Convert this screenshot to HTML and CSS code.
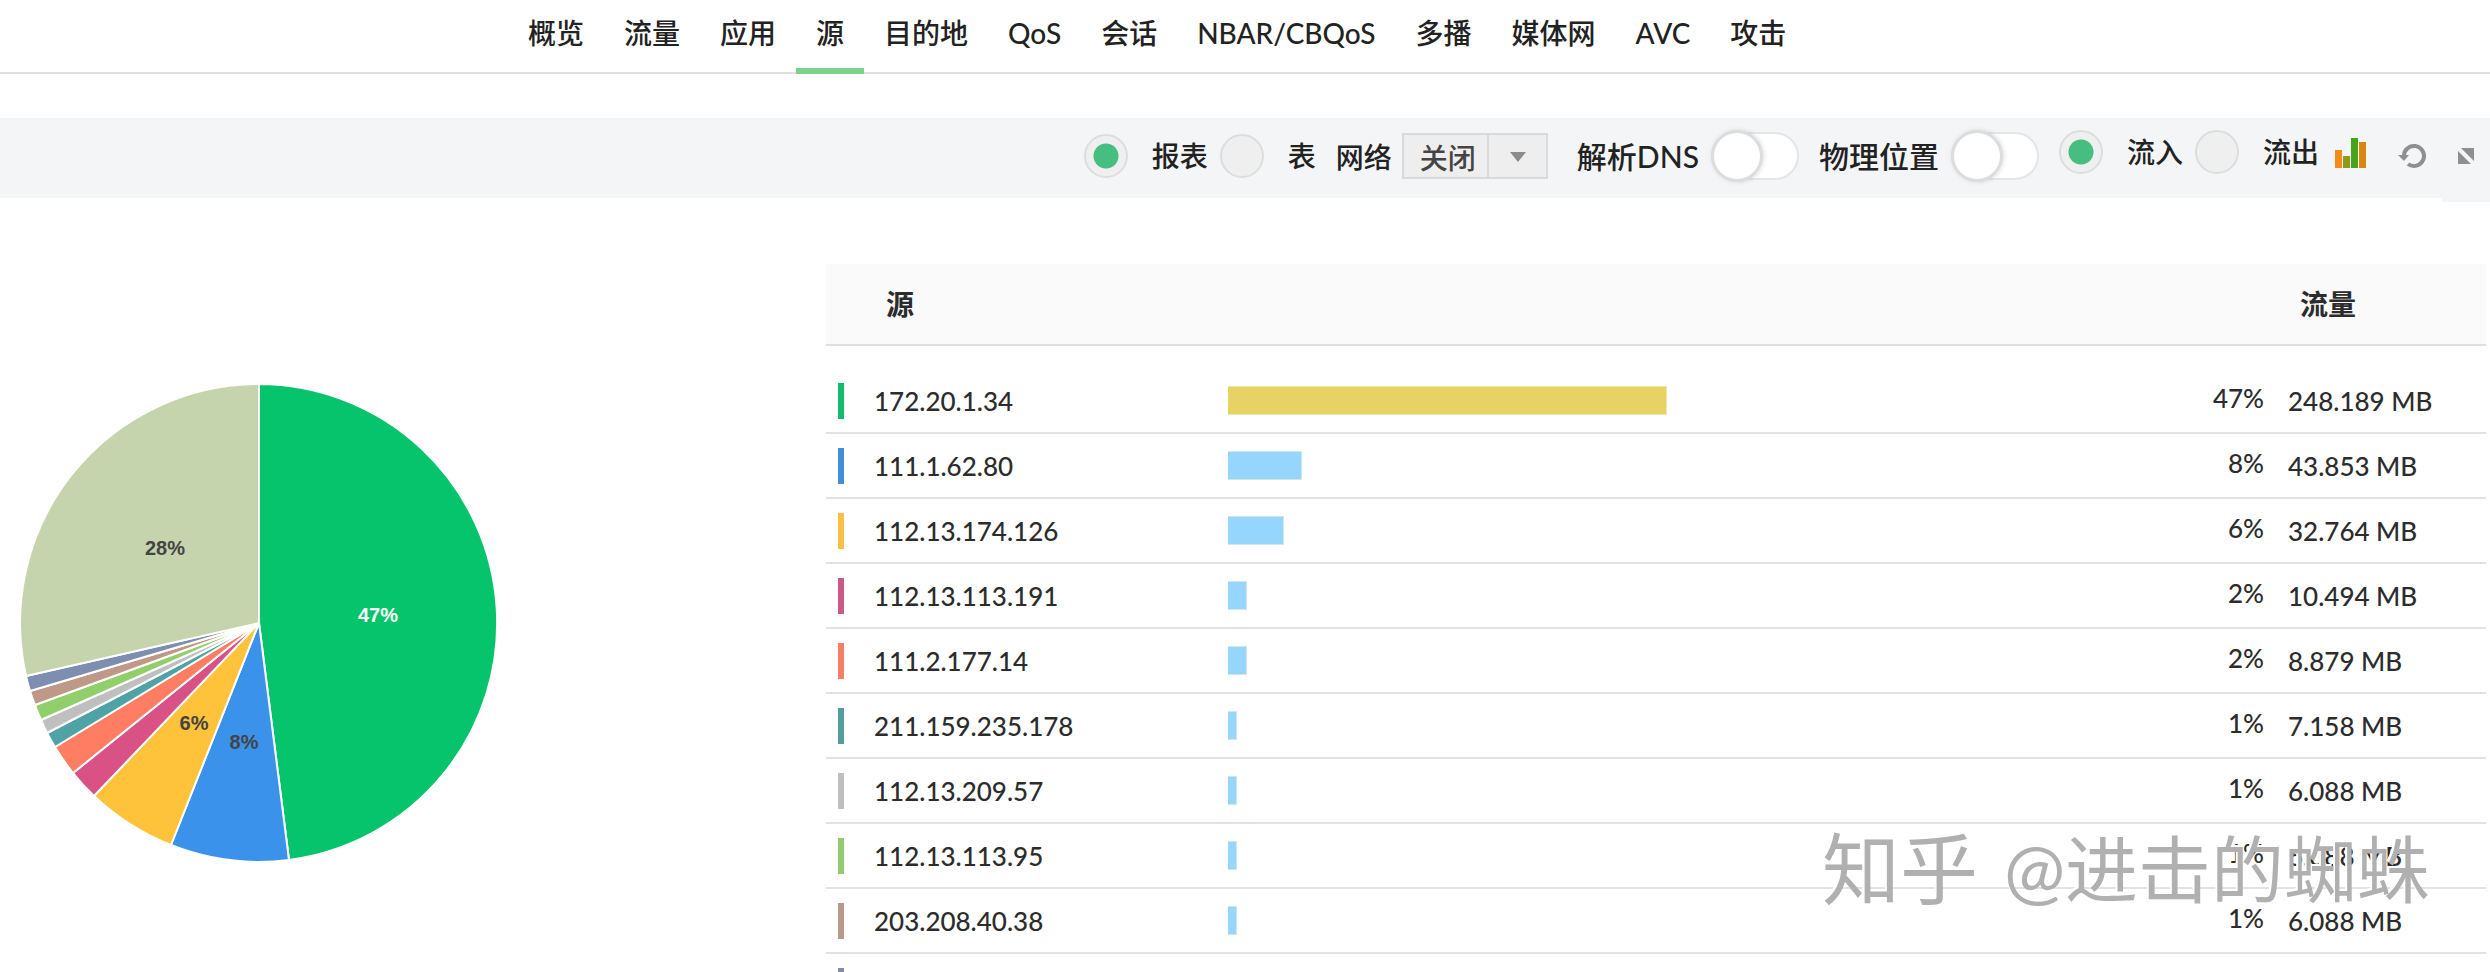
FILE: index.html
```
<!DOCTYPE html>
<html lang="zh-CN">
  <head>
    <meta charset="UTF-8" />
    <meta name="viewport" content="width=device-width, initial-scale=1.0" />
    <title>源</title>
    <link rel="stylesheet" href="styles.css">
  </head>
  <body>
    <nav class="tabs">
      <a href="#">概览</a>
      <a href="#">流量</a>
      <a href="#">应用</a>
      <a href="#" class="active">源</a>
      <a href="#">目的地</a>
      <a href="#">QoS</a>
      <a href="#">会话</a>
      <a href="#">NBAR/CBQoS</a>
      <a href="#">多播</a>
      <a href="#">媒体网</a>
      <a href="#">AVC</a>
      <a href="#">攻击</a>
    </nav>

    <div class="toolbar">
      <div class="group">
        <label class="radio"><input type="radio" name="view" checked />报表</label>
        <label class="radio"><input type="radio" name="view" />表</label>
      </div>
      <div class="group network">
        <label for="network">网络</label>
        <div class="select">
          <select id="network">
            <option>关闭</option>
            <option>打开</option>
          </select>
        </div>
      </div>
      <label class="switch">解析DNS<input type="checkbox" /></label>
      <label class="switch">物理位置<input type="checkbox" /></label>
      <div class="group direction">
        <label class="radio"><input type="radio" name="direction" checked />流入</label>
        <label class="radio"><input type="radio" name="direction" />流出</label>
      </div>
      <button class="icon chart-icon" aria-label="图表">
        <svg width="32" height="32" viewBox="0 0 32 32">
          <rect x="0" y="12" width="7" height="18" fill="#f58a1c" />
          <rect x="8" y="18" width="7" height="12" fill="#8f9a16" />
          <rect x="16" y="0" width="7" height="30" fill="#47a51c" />
          <rect x="24" y="4" width="7" height="26" fill="#d9860e" />
        </svg>
      </button>
      <button class="icon refresh-icon" aria-label="刷新">
        <svg width="28" height="26" viewBox="0 0 28 26">
          <path d="M6 14 A10 10 0 1 1 10 21" fill="none" stroke="#8e8f90" stroke-width="4" />
          <path d="M0 12 H11 L6 18 Z" fill="#8e8f90" />
        </svg>
      </button>
      <button class="icon" aria-label="展开">
        <svg width="18" height="18" viewBox="0 0 18 18">
          <path d="M4 1 H17 V14 Z M1 4 L14 17 H1 Z" fill="#8e8f90" />
        </svg>
      </button>
    </div>

    <main class="content">
      <section class="chart">
        <svg class="pie" width="478" height="478" viewBox="-239 -239 478 478">
          <g stroke="#fff" stroke-width="2" stroke-linejoin="round">
            <path fill="#06c46b" d="M0 0 L0 -239 A239 239 0 0 1 30 237 Z" />
            <path fill="#3b92ea" d="M0 0 L30 237 A239 239 0 0 1 -88 222 Z" />
            <path fill="#fec33b" d="M0 0 L-88 222 A239 239 0 0 1 -165 173 Z" />
            <path fill="#d85286" d="M0 0 L-165 173 A239 239 0 0 1 -186 150 Z" />
            <path fill="#ff7e63" d="M0 0 L-186 150 A239 239 0 0 1 -204 124 Z" />
            <path fill="#4fa3a6" d="M0 0 L-204 124 A239 239 0 0 1 -212 110 Z" />
            <path fill="#bfbfbf" d="M0 0 L-212 110 A239 239 0 0 1 -218 97 Z" />
            <path fill="#91cf6b" d="M0 0 L-218 97 A239 239 0 0 1 -224 82 Z" />
            <path fill="#be9987" d="M0 0 L-224 82 A239 239 0 0 1 -229 68 Z" />
            <path fill="#7e8eb0" d="M0 0 L-229 68 A239 239 0 0 1 -233 53 Z" />
            <path fill="#c6d4ae" d="M0 0 L-233 53 A239 239 0 0 1 0 -239 Z" />
          </g>
          <g class="pie-labels">
            <text class="light" x="119" y="-1">47%</text>
            <text x="-15" y="126">8%</text>
            <text x="-65" y="107">6%</text>
            <text x="-94" y="-68">28%</text>
          </g>
        </svg>
      </section>

      <section class="report">
        <table>
          <colgroup>
            <col class="col-color" />
            <col class="col-name" />
            <col />
            <col class="col-percent" />
            <col class="col-value" />
          </colgroup>
          <thead>
            <tr>
              <th></th>
              <th class="name">源</th>
              <th></th>
              <th></th>
              <th class="value">流量</th>
            </tr>
          </thead>
          <tbody id="rows"></tbody>
        </table>
      </section>
    </main>

    <div class="watermark"><span class="brand">知乎</span><span>@进击的蜘蛛</span></div>

    <script>
      // bar is the share of the bar column, in percent
      const rows = [
        { color: "#14bb6d", name: "172.20.1.34", bar: 47.2, percent: "47%", value: "248.189 MB", top: true },
        { color: "#428edb", name: "111.1.62.80", bar: 8, percent: "8%", value: "43.853 MB" },
        { color: "#f9c043", name: "112.13.174.126", bar: 6, percent: "6%", value: "32.764 MB" },
        { color: "#cc5885", name: "112.13.113.191", bar: 2, percent: "2%", value: "10.494 MB" },
        { color: "#f87f67", name: "111.2.177.14", bar: 2, percent: "2%", value: "8.879 MB" },
        { color: "#559c9e", name: "211.159.235.178", bar: 1, percent: "1%", value: "7.158 MB" },
        { color: "#bfbfbf", name: "112.13.209.57", bar: 1, percent: "1%", value: "6.088 MB" },
        { color: "#93cb71", name: "112.13.113.95", bar: 1, percent: "1%", value: "6.088 MB" },
        { color: "#ba998a", name: "203.208.40.38", bar: 1, percent: "1%", value: "6.088 MB" },
        { color: "#7f8cae", name: "", bar: 0, percent: "", value: "" },
      ];

      document.getElementById("rows").innerHTML = rows
        .map(
          (row) => `
          <tr>
            <td><div class="tick" style="background-color: ${row.color}"></div></td>
            <td>${row.name}</td>
            <td>${row.bar ? `<div class="bar${row.top ? " top" : ""}" style="width: ${row.bar}%"></div>` : ""}</td>
            <td class="percent">${row.percent}</td>
            <td class="value">${row.value}</td>
          </tr>`
        )
        .join("");
    </script>
  </body>
</html>
```
FILE: styles.css
```
* {
  box-sizing: border-box;
}
body {
  margin: 0;
  height: 100vh;
  overflow: hidden;
  font-family: Lato, "Noto Sans CJK SC", sans-serif;
  font-size: 28px;
  font-weight: 500;
  color: #222;
  background-color: #fff;
}
.tabs {
  display: flex;
  height: 74px;
  padding-left: 508px;
  border-bottom: 2px solid #dfdfdf;
}
.tabs a {
  height: 74px;
  padding: 0 20px;
  line-height: 66px;
  color: #222;
  text-decoration: none;
  white-space: nowrap;
}
.tabs a.active {
  border-bottom: 6px solid #7bd28a;
}
.toolbar {
  position: relative;
  display: flex;
  justify-content: flex-end;
  align-items: center;
  height: 80px;
  margin-top: 44px;
  padding: 0 15px 4px 0;
  background-color: #f4f5f7;
  white-space: nowrap;
}
/* small tab under the expand button */
.toolbar::after {
  content: "";
  position: absolute;
  right: 0;
  top: 100%;
  width: 48px;
  height: 4px;
  background-color: #f4f5f7;
}
.group {
  display: flex;
  align-items: center;
  gap: 12px;
}
.radio {
  display: flex;
  align-items: center;
  gap: 24px;
  line-height: 40px;
}
.radio input {
  appearance: none;
  width: 44px;
  height: 44px;
  margin: 0;
  border: 2px solid #dcdedd;
  border-radius: 50%;
  background-color: #efefef;
}
.radio input:checked {
  background-image: radial-gradient(circle, #45be80 12px, transparent 13px);
}
.network {
  margin-left: 20px;
  margin-right: 29px;
  gap: 10px;
}
.select {
  position: relative;
}
.select select {
  appearance: none;
  display: block;
  width: 146px;
  height: 46px;
  padding: 4px 0 0 16px;
  border: 2px solid #d9dadb;
  border-radius: 0;
  background: linear-gradient(#d9dadb, #d9dadb) 83px 0 / 2px 100% no-repeat #efeeee;
  font: inherit;
  color: #444;
}
.select::after {
  content: "";
  position: absolute;
  right: 22px;
  top: 19px;
  border: 8px solid transparent;
  border-top: 10px solid #8b8b8b;
  border-bottom: 0;
  pointer-events: none;
}
.switch {
  display: flex;
  align-items: center;
  gap: 12px;
  margin-right: 20px;
  font-size: 30px;
  line-height: 40px;
}
.switch input {
  appearance: none;
  display: flex;
  align-items: center;
  width: 88px;
  height: 48px;
  margin: 0;
  border: 2px solid #e4e5e6;
  border-radius: 24px;
  background-color: #fff;
}
.switch input::before {
  content: "";
  width: 46px;
  height: 46px;
  margin-left: -2px;
  border: 3px solid #dcdddd;
  border-radius: 50%;
  background-color: #fff;
  box-shadow: 1px 0 5px rgba(0, 0, 0, 0.12);
}
.direction {
  padding-bottom: 8px;
}
.icon {
  display: flex;
  padding: 0;
  border: none;
  background: none;
}
.chart-icon {
  margin: 0 31px 4px 16px;
}
.refresh-icon {
  margin-right: 31px;
}
.content {
  display: flex;
}
.chart {
  flex: 0 0 826px;
  padding: 186px 0 0 20px;
}
.pie {
  display: block;
}
.pie-labels {
  font-family: "Liberation Sans", Arial, sans-serif;
  font-size: 20px;
  font-weight: bold;
  text-anchor: middle;
  fill: #444;
}
.pie-labels .light {
  fill: #fff;
}
.report {
  flex: 1;
  padding: 66px 4px 0 0;
}
table {
  width: 100%;
  table-layout: fixed;
  border-collapse: separate;
  border-spacing: 0;
  font-size: 26px;
  color: #2c2c2c;
}
.col-color {
  width: 48px;
}
.col-name {
  width: 354px;
}
.col-percent {
  width: 106px;
}
.col-value {
  width: 222px;
}
th {
  height: 82px;
  padding: 0 0 2px;
  border-bottom: 2px solid #dfdfdf;
  background-color: #fafafa;
  font-size: 28px;
  text-align: left;
}
th.name {
  padding-left: 12px;
}
th.value {
  padding-left: 36px;
}
tbody::before {
  content: "";
  display: block;
  height: 23px;
}
td {
  height: 65px;
  padding: 0;
  border-bottom: 2px solid #e2e2e2;
  line-height: 40px;
  white-space: nowrap;
}
.tick {
  width: 6px;
  height: 36px;
  margin-left: 12px;
}
.bar {
  height: 29px;
  border: 1px solid #cfe6ea;
  border-left: none;
  background-color: #96d5fc;
}
.bar.top {
  border-color: #f0e6b0;
  background-color: #e8d263;
}
.percent {
  padding-bottom: 6px;
  text-align: right;
}
td.value {
  padding-left: 24px;
}
.watermark {
  position: absolute;
  right: 60px;
  bottom: 53px;
  display: flex;
  align-items: center;
  gap: 26px;
  font-size: 73px;
  font-weight: 400;
  line-height: 100px;
  color: #b0b0b0;
  text-shadow: -2px -2px 0 #fff;
  pointer-events: none;
}
.watermark .brand {
  font-size: 78px;
}
```
